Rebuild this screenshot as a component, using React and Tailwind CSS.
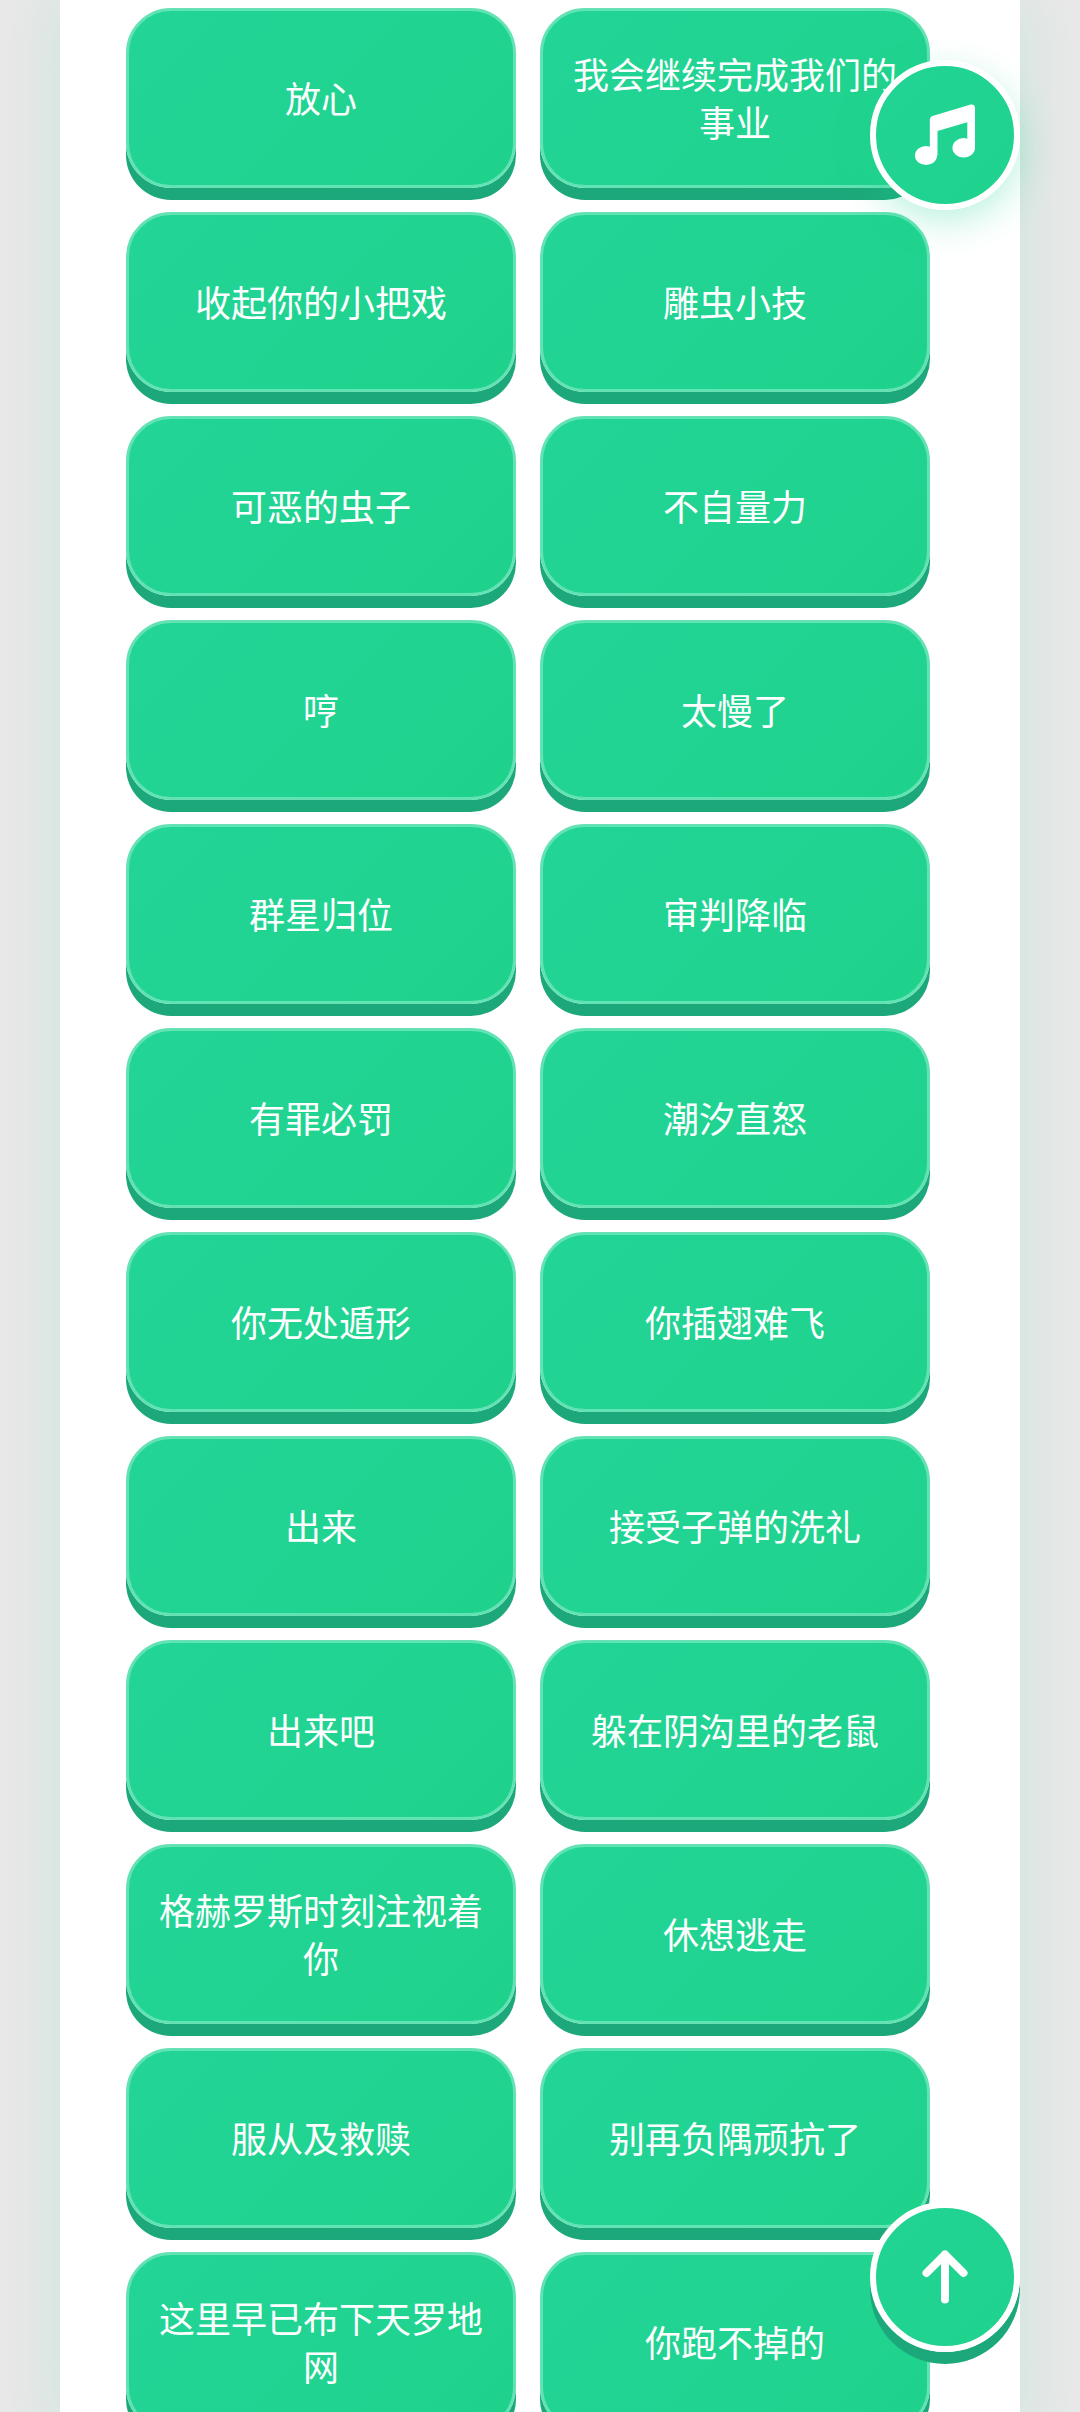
import React from 'react';

const phrases = [
    "放心",
    "我会继续完成我们的事业",
    "收起你的小把戏",
    "雕虫小技",
    "可恶的虫子",
    "不自量力",
    "哼",
    "太慢了",
    "群星归位",
    "审判降临",
    "有罪必罚",
    "潮汐直怒",
    "你无处遁形",
    "你插翅难飞",
    "出来",
    "接受子弹的洗礼",
    "出来吧",
    "躲在阴沟里的老鼠",
    "格赫罗斯时刻注视着你",
    "休想逃走",
    "服从及救赎",
    "别再负隅顽抗了",
    "这里早已布下天罗地网",
    "你跑不掉的",
];

const VoiceButton = ({ text }) => (
    <button
        type="button"
        className="flex h-[180px] items-center justify-center rounded-[45px] border-3 border-[#63e2b3] bg-linear-135 from-[#22d598] to-[#1fd28b] px-6 pb-[2px] text-center text-4xl leading-12 font-normal text-white shadow-[0_12px_0_#1ca87a]"
    >
        {text}
    </button>
);

const MusicIcon = () => (
    <svg viewBox="0 0 60 62" className="h-[62px] w-[60px]" fill="#fff" aria-hidden="true">
        <ellipse cx="11" cy="51.5" rx="11" ry="9.5" />
        <ellipse cx="48.7" cy="43.8" rx="11.3" ry="9.7" />
        <path d="M14.8 15.8C14.8 13.7 16.2 12.3 18.3 11.7L55.7 .6C58 0 60 1.3 60 3.7V43.8H52.3V18.3L22.5 27V51.5H14.8Z" />
    </svg>
);

const ArrowUpIcon = () => (
    <svg viewBox="0 0 46 54" className="h-[54px] w-[46px]" fill="none" stroke="#fff" strokeWidth="8" strokeLinecap="round" strokeLinejoin="round" aria-hidden="true">
        <path d="M23 4.5V49.5M4.5 23L23 4.5L41.5 23" />
    </svg>
);

const App = () => {
    return (
        <div className="relative h-screen overflow-hidden bg-[#e8e8e8] px-[60px] font-['Noto_Sans_CJK_SC',sans-serif]">
            <main className="min-h-full bg-white pt-2 pr-[90px] pl-[66px] shadow-[0_0_60px_rgba(32,212,148,0.15)]">
                <div className="grid grid-cols-2 gap-6">
                    {phrases.map((text) => (
                        <VoiceButton key={text} text={text} />
                    ))}
                </div>
            </main>

            {/* Floating buttons */}
            <button
                type="button"
                aria-label="音乐"
                className="fixed top-[60px] right-[60px] flex size-[150px] items-center justify-center rounded-full border-6 border-white bg-linear-135 from-[#21d495] to-[#1fd28d] shadow-[0_12px_36px_rgba(32,212,148,0.3)]"
            >
                <MusicIcon />
            </button>
            <button
                type="button"
                aria-label="返回顶部"
                className="fixed right-[60px] bottom-[60px] flex size-[150px] items-center justify-center rounded-full border-6 border-white bg-linear-135 from-[#21d495] to-[#1fd28d] shadow-[0_12px_0_#1ca87a]"
            >
                <ArrowUpIcon />
            </button>
        </div>
    );
};

export default App;
